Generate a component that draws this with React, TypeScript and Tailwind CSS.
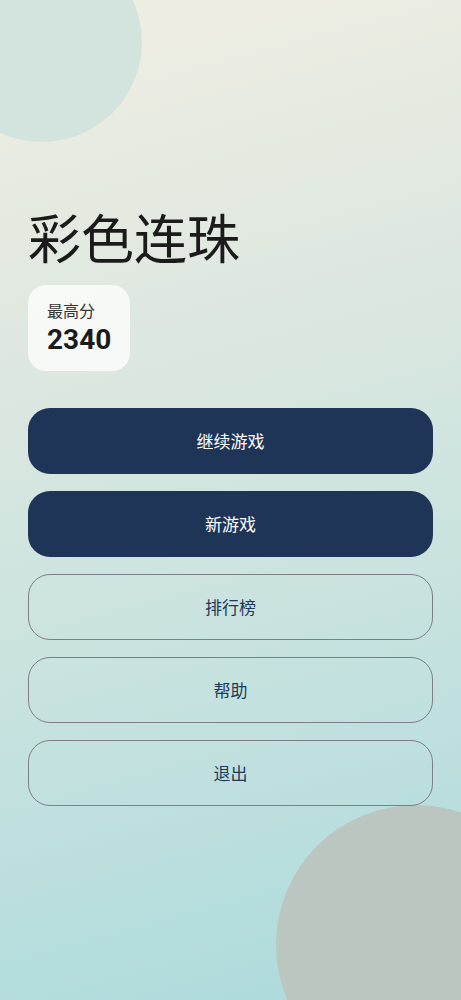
import React from "react";

const font = { fontFamily: '"Noto Sans CJK SC", "Noto Sans", sans-serif' };

function MenuButton({ label, primary }: { label: string; primary?: boolean }) {
  if (primary) {
    return (
      <button className="h-[66px] w-full rounded-[22px] bg-[#1f3557] text-[17px] text-white">
        {label}
      </button>
    );
  }
  return (
    <button className="h-[66px] w-full rounded-[22px] border-[1.5px] border-[#7f7e86] text-[17px] text-[#22395a]">
      {label}
    </button>
  );
}

export default function App() {
  return (
    <div
      style={font}
      className="relative h-[1000px] w-full overflow-hidden bg-[linear-gradient(165deg,#f1eee3_0%,#dfe8e0_30%,#c6e2df_65%,#acdadc_100%)]"
    >
      <div className="absolute -left-[58px] -top-[58px] h-[200px] w-[200px] rounded-full bg-[#d3e4df]" />
      <div className="absolute left-[276px] top-[805px] h-[280px] w-[280px] rounded-full bg-[#bbc6c0]" />

      <div className="relative flex flex-col px-[28px] pt-[198px]">
        <h1 className="text-[53px] leading-[76px] text-[#1b1b1b]">彩色连珠</h1>
        <div className="mt-[11px] flex w-[102px] flex-col rounded-[18px] bg-white/75 px-[19px] pb-[13px] pt-[13px]">
          <span className="text-[16px] leading-[24px] text-[#333]">最高分</span>
          <span className="text-[28px] font-bold leading-[36px] text-[#1b1b1b]" style={{ fontFamily: "Roboto, sans-serif" }}>
            2340
          </span>
        </div>
        <div className="mt-[37px] flex flex-col gap-[17px]">
          <MenuButton label="继续游戏" primary />
          <MenuButton label="新游戏" primary />
          <MenuButton label="排行榜" />
          <MenuButton label="帮助" />
          <MenuButton label="退出" />
        </div>
      </div>
    </div>
  );
}
